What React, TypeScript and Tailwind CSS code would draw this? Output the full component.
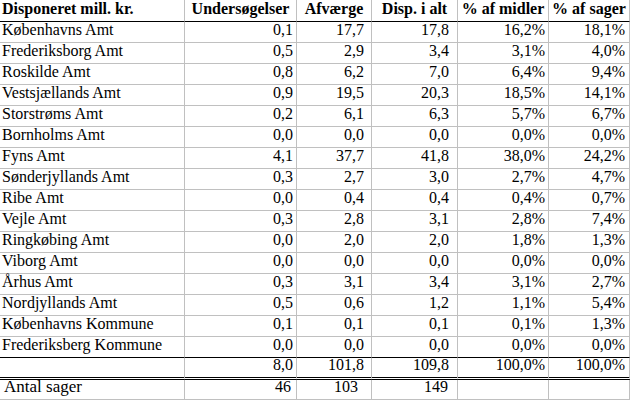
import React from 'react';

const cols = ['w-[185px]', 'w-[112px]', 'w-[75px]', 'w-[86px]', 'w-[91px]', 'w-[81px]'];
const numPad = ['', 'pr-[3px]', 'pr-[7px]', 'pr-[8px]', 'pr-[3px]', 'pr-[4px]'];

const headers = ['Disponeret mill. kr.', 'Undersøgelser', 'Afværge', 'Disp. i alt', '% af midler', '% af sager'];

const rows = [
    ['Københavns Amt', '0,1', '17,7', '17,8', '16,2%', '18,1%'],
    ['Frederiksborg Amt', '0,5', '2,9', '3,4', '3,1%', '4,0%'],
    ['Roskilde Amt', '0,8', '6,2', '7,0', '6,4%', '9,4%'],
    ['Vestsjællands Amt', '0,9', '19,5', '20,3', '18,5%', '14,1%'],
    ['Storstrøms Amt', '0,2', '6,1', '6,3', '5,7%', '6,7%'],
    ['Bornholms Amt', '0,0', '0,0', '0,0', '0,0%', '0,0%'],
    ['Fyns Amt', '4,1', '37,7', '41,8', '38,0%', '24,2%'],
    ['Sønderjyllands Amt', '0,3', '2,7', '3,0', '2,7%', '4,7%'],
    ['Ribe Amt', '0,0', '0,4', '0,4', '0,4%', '0,7%'],
    ['Vejle Amt', '0,3', '2,8', '3,1', '2,8%', '7,4%'],
    ['Ringkøbing Amt', '0,0', '2,0', '2,0', '1,8%', '1,3%'],
    ['Viborg Amt', '0,0', '0,0', '0,0', '0,0%', '0,0%'],
    ['Århus Amt', '0,3', '3,1', '3,4', '3,1%', '2,7%'],
    ['Nordjyllands Amt', '0,5', '0,6', '1,2', '1,1%', '5,4%'],
    ['Københavns Kommune', '0,1', '0,1', '0,1', '0,1%', '1,3%'],
    ['Frederiksberg Kommune', '0,0', '0,0', '0,0', '0,0%', '0,0%'],
];

const total = ['', '8,0', '101,8', '109,8', '100,0%', '100,0%'];

// Antal sager row numbers sit a bit off the right edge in the original sheet
const antal = ['Antal sager', '46', '103', '149', '', ''];
const antalPad = ['', 'pr-[5px]', 'pr-[13px]', 'pr-[9px]', '', ''];

const App = () => {
    return (
        <div className="w-[630px] h-[401px] bg-white text-black text-[16px] font-['Liberation_Serif','Times_New_Roman',serif]">
            {/* Header */}
            <div className="flex h-[22px]">
                {headers.map((h, i) => (
                    <div
                        key={i}
                        className={`${cols[i]} h-full flex items-end border-r border-b border-r-[#c0c0c0] border-b-black font-bold whitespace-nowrap ${i === 0 ? 'justify-start pl-[2px]' : 'justify-center'}`}
                    >
                        {h}
                    </div>
                ))}
            </div>

            {/* Data rows */}
            {rows.map((r, ri) => (
                <div key={ri} className="flex h-[21px]">
                    {r.map((c, i) => (
                        <div
                            key={i}
                            className={`${cols[i]} h-full flex items-end border-r border-b border-r-[#c0c0c0] whitespace-nowrap ${ri === rows.length - 1 ? 'border-b-black' : 'border-b-[#c0c0c0]'} ${i === 0 ? 'justify-start pl-[2px]' : `justify-end ${numPad[i]}`}`}
                        >
                            {c}
                        </div>
                    ))}
                </div>
            ))}

            {/* Total */}
            <div className="flex h-[22px]">
                {total.map((c, i) => (
                    <div
                        key={i}
                        className={`${cols[i]} h-full flex items-end border-r border-r-[#c0c0c0] border-b-[3px] border-double border-b-black whitespace-nowrap ${i === 0 ? 'justify-start pl-[2px]' : `justify-end ${numPad[i]}`}`}
                    >
                        {c}
                    </div>
                ))}
            </div>

            {/* Antal sager */}
            <div className="flex h-[20px]">
                {antal.map((c, i) => (
                    <div
                        key={i}
                        className={`${cols[i]} h-full flex items-end border-r border-b border-[#c0c0c0] whitespace-nowrap ${i === 0 ? 'justify-start pl-[4px] text-[17px]' : `justify-end ${antalPad[i]}`}`}
                    >
                        {c}
                    </div>
                ))}
            </div>
        </div>
    );
};

export default App;
